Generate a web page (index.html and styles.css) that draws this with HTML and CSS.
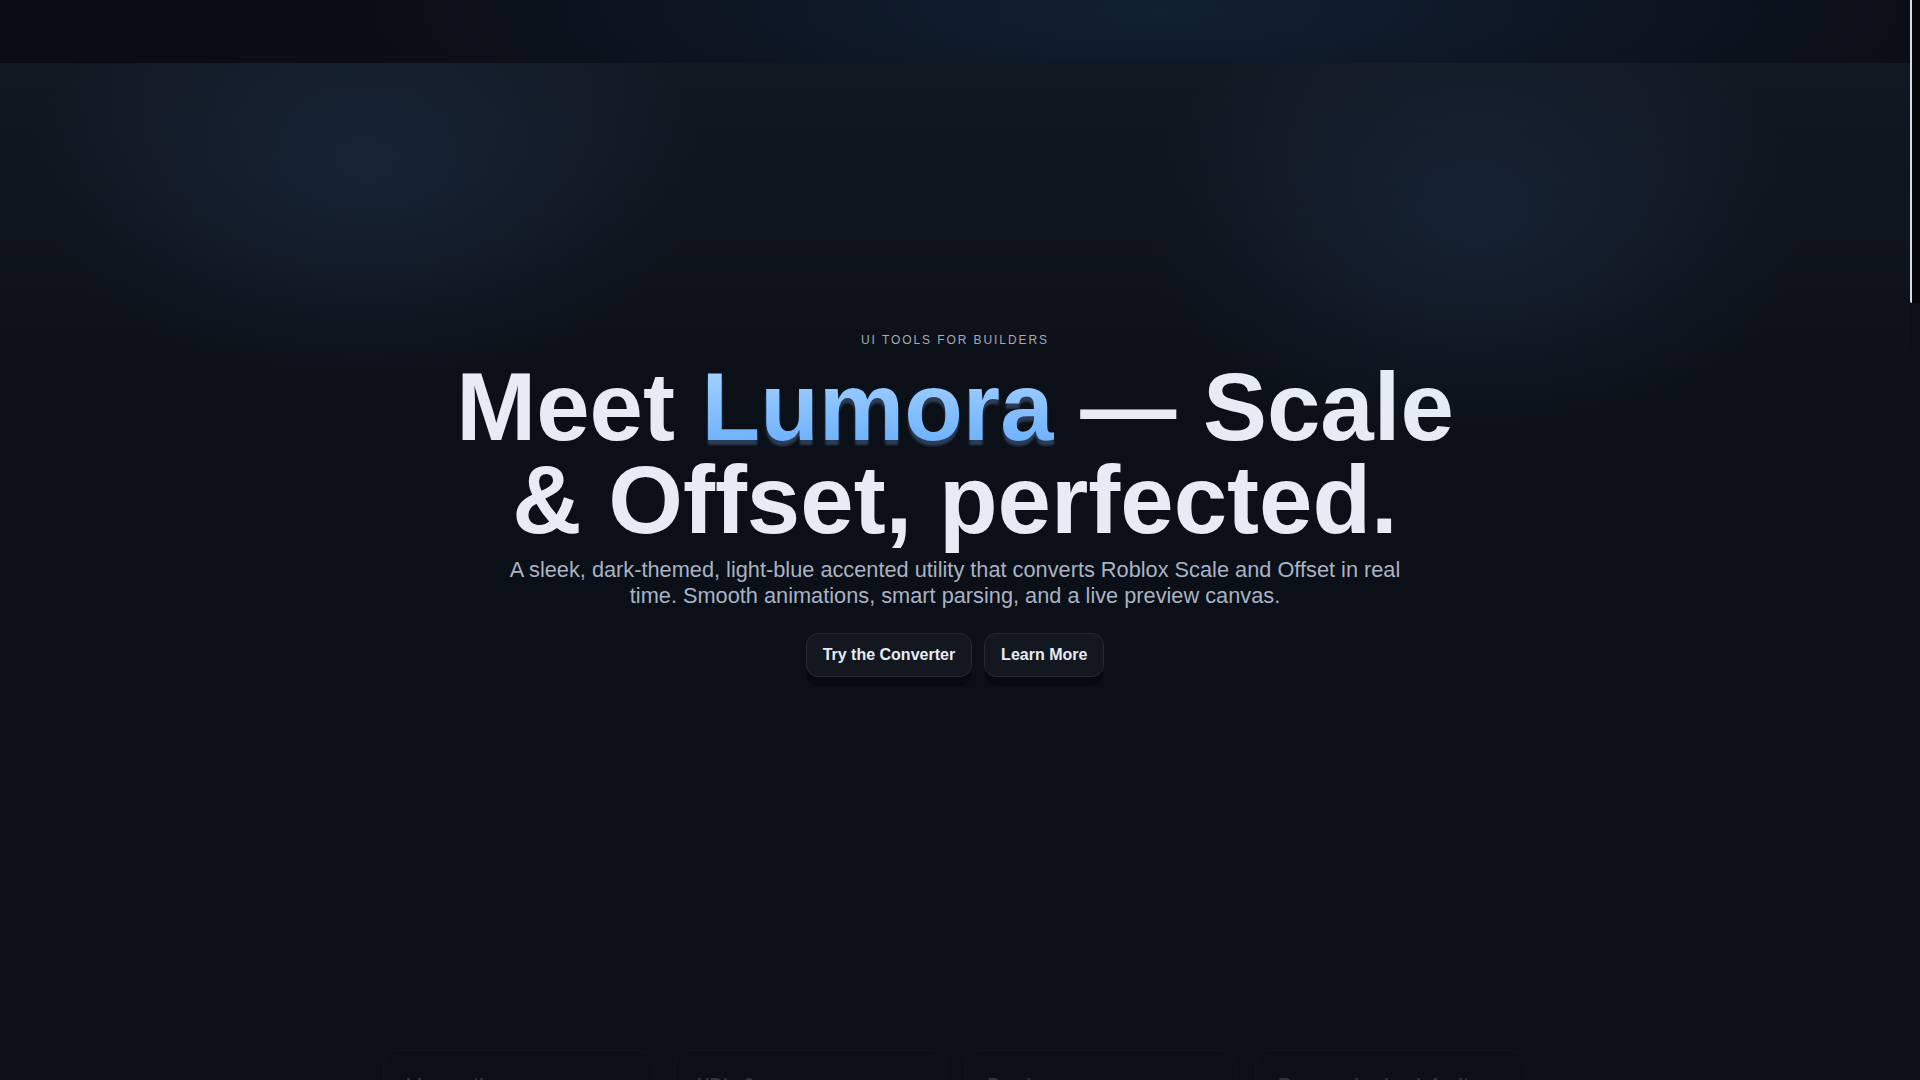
FILE: index.html
```html
<!DOCTYPE html>
<html lang="en">
<head>
<meta charset="utf-8">
<title>Lumora — Scale &amp; Offset, perfected.</title>
<link rel="stylesheet" href="styles.css">
</head>
<body>
<div class="page">
  <header class="topbar"></header>

  <section class="hero">
    <p class="eyebrow">UI TOOLS FOR BUILDERS</p>
    <h1 class="title">Meet <span class="accent">Lumora</span> — Scale<br>&amp; Offset, perfected.</h1>
    <p class="lead">A sleek, dark-themed, light-blue accented utility that converts Roblox Scale and Offset in real time. Smooth animations, smart parsing, and a live preview canvas.</p>
    <div class="actions">
      <a class="btn" href="#converter">Try the Converter</a>
      <a class="btn" href="#features">Learn More</a>
    </div>
  </section>

  <section class="features" id="features">
    <div class="card">
      <h3 class="card-title">Live math</h3>
      <p class="card-text">Scale and Offset update instantly as you type, with no buttons to press.</p>
    </div>
    <div class="card">
      <h3 class="card-title">UDim2 parser</h3>
      <p class="card-text">Paste any UDim2.new(...) string and Lumora reads every component.</p>
    </div>
    <div class="card">
      <h3 class="card-title">Preview canvas</h3>
      <p class="card-text">See your frame drawn on a live canvas at any screen resolution.</p>
    </div>
    <div class="card">
      <h3 class="card-title">Responsive by default</h3>
      <p class="card-text">Get layouts that look right on phones, tablets and desktops.</p>
    </div>
  </section>

  <section class="converter" id="converter">
    <h2 class="section-title">Converter</h2>
    <div class="panel"></div>
  </section>

  <section class="faq">
    <h2 class="section-title">Questions</h2>
    <div class="panel small"></div>
  </section>

  <footer class="footer">Lumora</footer>
</div>
<div class="rail" aria-hidden="true"><div class="rail-thumb"></div></div>
</body>
</html>
```

FILE: styles.css
```css
html {
  background: #0b0f17;
}

body {
  margin: 0;
  padding-right: 10px;
  font-family: "Liberation Sans", Arial, sans-serif;
  color: #e6ebf5;
  background: #0b0f17;
}

.rail {
  position: fixed;
  top: 0;
  right: 0;
  width: 10px;
  height: 100vh;
  background: #0b0f17;
}

.rail-thumb {
  height: 303px;
  background: #05070b;
  border-left: 2px solid #d5dbe5;
  border-radius: 0 0 2px 2px;
}

.page {
  background:
    radial-gradient(ellipse 340px 220px at 367px 165px, rgba(34, 58, 86, 0.40), rgba(34, 58, 86, 0) 100%),
    radial-gradient(ellipse 330px 240px at 1475px 215px, rgba(34, 58, 86, 0.38), rgba(34, 58, 86, 0) 100%),
    linear-gradient(180deg, #131a25 0, #0b0f17 420px, #0b0f17 100%);
}

.topbar {
  height: 63px;
  background:
    radial-gradient(ellipse 820px 170px at 1160px 10px, rgba(18, 34, 54, 0.9), rgba(18, 34, 54, 0) 100%),
    #0a0d15;
}

.hero {
  display: flex;
  flex-direction: column;
  align-items: center;
  text-align: center;
  padding: 270px 24px 0;
  height: 987px;
  box-sizing: border-box;
}

.eyebrow {
  margin: 0 0 14px;
  font-size: 12px;
  line-height: 1.2;
  letter-spacing: 0.16em;
  color: #a3abb9;
}

.title {
  margin: 0;
  font-size: 96px;
  line-height: 0.96;
  font-weight: 700;
  color: #e6ebf5;
}

.accent {
  display: inline-block;
  background: linear-gradient(180deg, #a9d5ff 0%, #66acff 100%);
  -webkit-background-clip: text;
  background-clip: text;
  color: transparent;
  filter: drop-shadow(0 5px 1px rgba(110, 150, 205, 0.34));
}

.lead {
  margin: 11px 0 0;
  max-width: 910px;
  font-size: 21.75px;
  line-height: 26.5px;
  color: #a9b3c4;
}

.actions {
  display: flex;
  gap: 12px;
  margin-top: 23px;
}

.btn {
  display: inline-block;
  padding: 12px 16px;
  font-size: 16px;
  line-height: 18px;
  font-weight: 700;
  color: #e6ebf5;
  text-decoration: none;
  background: #13171f;
  border: 1px solid #242934;
  border-radius: 12px;
  box-shadow: 0 10px 1px -1px rgba(0, 0, 0, 0.35);
}

.features {
  display: grid;
  grid-template-columns: repeat(4, 1fr);
  gap: 19px;
  width: 1144px;
  margin: 0 auto;
  opacity: 0.17;
}

.card {
  padding: 24px 22px;
  border: 1px solid #2a313d;
  border-radius: 14px;
  background: #0d1119;
}

.card-title {
  margin: 0 0 8px;
  font-size: 18px;
  font-weight: 700;
  color: #e6ebf5;
}

.card-text {
  margin: 0;
  font-size: 15px;
  line-height: 1.5;
  color: #a9b3c4;
}

.converter,
.faq {
  width: 1144px;
  margin: 0 auto;
  padding-top: 140px;
  opacity: 0.17;
}

.section-title {
  margin: 0 0 24px;
  font-size: 32px;
  color: #e6ebf5;
}

.panel {
  height: 1300px;
  border: 1px solid #2a313d;
  border-radius: 16px;
  background: #0d1119;
}

.panel.small {
  height: 700px;
}

.footer {
  padding: 120px 0 80px;
  text-align: center;
  font-size: 14px;
  color: #3a414d;
}
```
